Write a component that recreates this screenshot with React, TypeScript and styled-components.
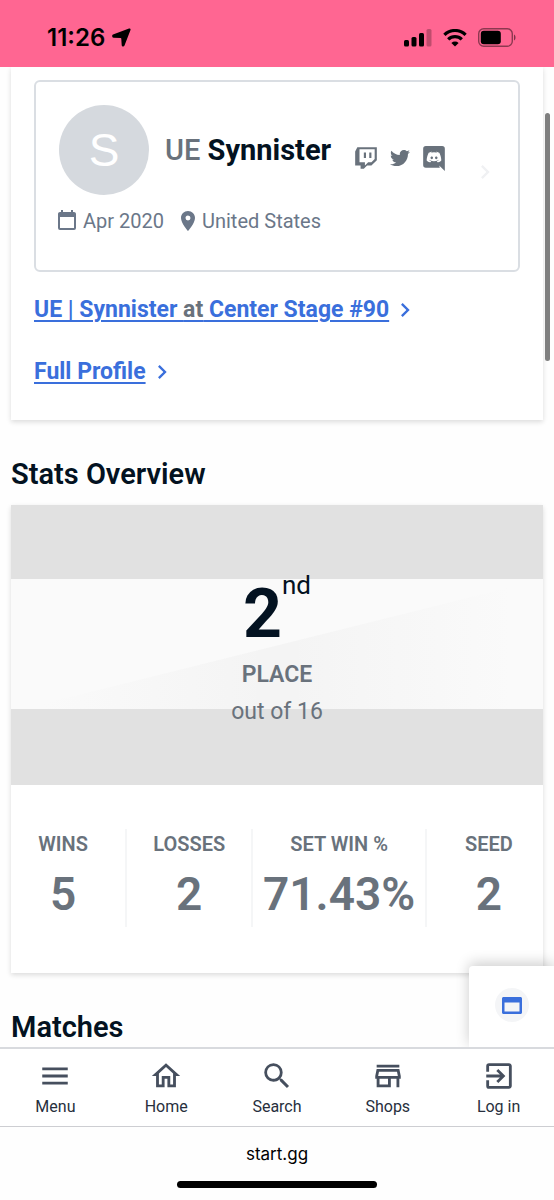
import React from "react";
import styled, { createGlobalStyle } from "styled-components";
import {
  MdMenu,
  MdSearch,
  MdOutlineStore,
  MdExitToApp,
  MdPlace,
  MdChevronRight,
} from "react-icons/md";
import { FaTwitter } from "react-icons/fa";

const GlobalStyle = createGlobalStyle`
  *, *::before, *::after { box-sizing: border-box; }
  body {
    margin: 0;
    background: #fefefe;
    font-family: Roboto, "Liberation Sans", sans-serif;
    color: #031221;
  }
  h1, h2, p, dl, dd, dt, ul { margin: 0; padding: 0; }
`;

const Page = styled.div`
  display: flex;
  flex-direction: column;
  min-height: 100vh;
`;

const StatusBar = styled.header`
  position: sticky;
  top: 0;
  z-index: 3;
  display: flex;
  align-items: center;
  justify-content: space-between;
  height: 67px;
  padding: 8px 37px 0 47px;
  background: #ff6692;
  color: #000;
`;

const StatusGroup = styled.div<{ $gap: number }>`
  display: flex;
  align-items: center;
  gap: ${(p) => p.$gap}px;
`;

const Clock = styled.span`
  font: 600 24px/32px Inter, sans-serif;
`;

const ScrollThumb = styled.div`
  position: fixed;
  top: 113px;
  right: 4px;
  z-index: 2;
  width: 5px;
  height: 248px;
  border-radius: 3px;
  background: #7f7f7f;
`;

const Main = styled.main`
  flex: 1;
  padding: 0 11px;
`;

const Card = styled.section`
  background: #fff;
  box-shadow: 0 2px 5px rgba(0, 0, 0, 0.14);
`;

const ProfileCard = styled(Card)`
  padding: 13px 23px 32px;
`;

const PlayerBox = styled.div`
  display: flex;
  align-items: center;
  justify-content: space-between;
  height: 192px;
  padding: 0 19px 8px;
  border: 2px solid #dadee3;
  border-radius: 6px;
`;

const PlayerInfo = styled.div`
  display: flex;
  flex-direction: column;
  gap: 12px;
  padding-bottom: 4px;
`;

const MoreArrow = styled(MdChevronRight)`
  color: #f0f1f3;
`;

const PlayerTop = styled.div`
  display: flex;
  align-items: center;
`;

const Avatar = styled.div`
  display: flex;
  align-items: center;
  justify-content: center;
  width: 90px;
  height: 90px;
  margin: 0 16px 0 4px;
  border-radius: 50%;
  background: #d5d9de;
  color: #fff;
  font: 400 46px/90px "Liberation Sans", Arial, sans-serif;
`;

const PlayerName = styled.h1`
  font-size: 29px;
  line-height: 32px;
  font-weight: 700;
`;

const Prefix = styled.span`
  color: #69727c;
  font-weight: 500;
`;

const Socials = styled.div`
  display: flex;
  align-items: center;
  gap: 11px;
  margin-left: 22px;
  padding-top: 16px;
`;

const SocialLink = styled.a`
  display: flex;
  color: #69727c;
`;

const Meta = styled.div`
  display: flex;
  align-items: center;
  gap: 12px;
  color: #6b7789;
  font-size: 20px;
  line-height: 28px;
`;

const MetaItem = styled.span<{ $gap: number }>`
  display: flex;
  align-items: center;
  gap: ${(p) => p.$gap}px;
`;

const LinkRow = styled.p`
  display: flex;
  align-items: center;
  gap: 2px;
  margin-top: 22px;
  color: #3a6fdc;
  font-size: 23px;
  line-height: 32px;
  font-weight: 700;

  & + & { margin-top: 30px; }
`;

const TextLink = styled.a`
  color: #3a6fdc;
  text-decoration: underline;
  text-decoration-thickness: 2px;
  text-underline-offset: 3px;
`;

const Joiner = styled.span`
  color: #69727c;
`;

const SectionTitle = styled.h2`
  padding-top: 38px;
  font-size: 29px;
  line-height: 32px;
  font-weight: 600;
`;

const StatsCard = styled(Card)`
  margin-top: 15px;
  padding-bottom: 46px;
`;

const Placement = styled.div`
  display: flex;
  flex-direction: column;
  align-items: center;
  height: 280px;
  padding-top: 66px;
  background:
    linear-gradient(#e1e1e1 74px, transparent 74px, transparent 204px, #e1e1e1 204px),
    linear-gradient(to right, #fafafa 6%, #fafafa00 48%, #fafafa00 52%, #fafafa 94%),
    linear-gradient(166deg, #fafafa 50%, #f4f4f4 calc(50% + 1px));
`;

const Rank = styled.p`
  display: flex;
  align-items: flex-start;
  font-size: 68px;
  line-height: 86px;
  font-weight: 700;
`;

const Ordinal = styled.span`
  font-size: 26px;
  line-height: 28px;
  font-weight: 400;
`;

const PlaceLabel = styled.p`
  margin-top: 2px;
  color: #69727c;
  font-size: 23px;
  line-height: 32px;
  font-weight: 600;
`;

const PlaceTotal = styled.p`
  margin-top: 5px;
  color: #69727c;
  font-size: 23px;
  line-height: 32px;
`;

const StatList = styled.dl`
  display: grid;
  grid-template-columns: 8fr 8fr 11fr 8fr;
  margin: 44px -10px 0;
`;

const Stat = styled.div`
  height: 98px;
  border-right: 2px solid #f5f6f7;
  color: #69727c;
  text-align: center;

  &:last-child { border-right-color: transparent; }
`;

const StatName = styled.dt`
  font-size: 20px;
  line-height: 30px;
  font-weight: 600;
`;

const StatValue = styled.dd`
  margin-top: 5px;
  font-size: 46px;
  line-height: 60px;
  font-weight: 600;
`;

const Footer = styled.footer`
  position: sticky;
  bottom: 0;
  z-index: 3;
  background: #fefefe;
`;

const WidgetButton = styled.button`
  position: absolute;
  right: 0;
  bottom: 100%;
  z-index: -1;
  display: flex;
  justify-content: center;
  width: 85px;
  height: 81px;
  padding: 22px 0 0;
  border: 0;
  border-radius: 4px 0 0 0;
  background: #fff;
  box-shadow: 0 -3px 14px rgba(0, 0, 0, 0.2);
`;

const WidgetIcon = styled.span`
  display: flex;
  align-items: center;
  justify-content: center;
  width: 34px;
  height: 34px;
  border-radius: 50%;
  background: #f4f5f7;
  color: #3a6fdc;
`;

const TabBar = styled.nav`
  display: grid;
  grid-template-columns: repeat(5, 1fr);
  height: 80px;
  border-top: 2px solid #d8dade;
  border-bottom: 1px solid #cdced2;
  background: #fff;
`;

const Tab = styled.a`
  display: flex;
  flex-direction: column;
  align-items: center;
  padding-top: 10px;
  color: #464f5e;
  text-decoration: none;
`;

const TabLabel = styled.span`
  margin-top: 2px;
  color: #272f3d;
  font-size: 16px;
  line-height: 24px;
`;

const AddressBar = styled.div`
  display: flex;
  flex-direction: column;
  align-items: center;
  gap: 15px;
  padding: 15px 0 12px;
  color: #000;
  font: 400 17px/24px Inter, sans-serif;
`;

const HomeIndicator = styled.div`
  width: 36%;
  height: 7px;
  border-radius: 4px;
  background: #000;
`;

const ICONS = {
  twitch:
    "M4,2H22V14L17,19H13L10,22H7V19H2V6L4,2M20,13V4H6V16H11V19L14,16H17L20,13M15,7H17V12H15V7M12,7V12H10V7H12Z",
  discord:
    "M22,24L16.75,19L17.38,21H4.5A2.5,2.5 0 0,1 2,18.5V3.5A2.5,2.5 0 0,1 4.5,1H19.5A2.5,2.5 0 0,1 22,3.5V24M12,6.8C9.32,6.8 7.44,7.95 7.44,7.95C8.47,7.03 10.27,6.5 10.27,6.5L10.1,6.33C8.41,6.36 6.88,7.53 6.88,7.53C5.16,11.12 5.27,14.22 5.27,14.22C6.67,16.03 8.75,15.9 8.75,15.9L9.46,15C8.21,14.73 7.42,13.62 7.42,13.62C7.42,13.62 9.3,14.9 12,14.9C14.7,14.9 16.58,13.62 16.58,13.62C16.58,13.62 15.79,14.73 14.54,15L15.25,15.9C15.25,15.9 17.33,16.03 18.73,14.22C18.73,14.22 18.84,11.12 17.12,7.53C17.12,7.53 15.59,6.36 13.9,6.33L13.73,6.5C13.73,6.5 15.53,7.03 16.56,7.95C16.56,7.95 14.68,6.8 12,6.8M9.93,10.59C10.58,10.59 11.11,11.16 11.1,11.86C11.1,12.55 10.58,13.13 9.93,13.13C9.29,13.13 8.77,12.55 8.77,11.86C8.77,11.16 9.28,10.59 9.93,10.59M14.1,10.59C14.75,10.59 15.27,11.16 15.27,11.86C15.27,12.55 14.75,13.13 14.1,13.13C13.46,13.13 12.94,12.55 12.94,11.86C12.94,11.16 13.45,10.59 14.1,10.59Z",
  calendar:
    "M19,19H5V8H19M16,1V3H8V1H6V3H5C3.89,3 3,3.89 3,5V19A2,2 0 0,0 5,21H19A2,2 0 0,0 21,19V5C21,3.89 20.1,3 19,3H18V1",
  home:
    "M12,5.69L17,10.19V18H15V12H9V18H7V10.19L12,5.69M12,3L2,12H5V20H11V14H13V20H19V12H22",
};

const PathIcon = ({ name, size }: { name: keyof typeof ICONS; size: number }) => (
  <svg width={size} height={size} viewBox="0 0 24 24" fill="currentColor" aria-hidden="true">
    <path d={ICONS[name]} />
  </svg>
);

const WindowIcon = () => (
  <svg width="20" height="17" viewBox="0 0 20 17" aria-hidden="true">
    <path
      fill="currentColor"
      fillRule="evenodd"
      d="M1.5 0h17c.8 0 1.5.7 1.5 1.5v14c0 .8-.7 1.5-1.5 1.5h-17C.7 17 0 16.3 0 15.5v-14C0 .7.7 0 1.5 0ZM2.5 5.5v9h15v-9Z"
    />
  </svg>
);

const LocationArrow = () => (
  <svg width="19" height="19" viewBox="0 0 19 19" aria-hidden="true">
    <path
      d="M1 6.600 17 .5c1-.4 1.900.4 1.500 1.500L12.500 17.600c-.5 1.300-2.700 1.100-2.800-.4L9.300 10.800c0-.5-.2-.7-.7-.7L1.600 9.800C-.1 9.700-.3 7.200 1 6.600Z"
      fill="#000"
    />
  </svg>
);

const Signal = () => (
  <svg width="28" height="18" viewBox="0 0 28 18" aria-hidden="true">
    <rect x="0" y="11" width="5" height="6.5" rx="1.5" />
    <rect x="7.5" y="8" width="5" height="9.5" rx="1.5" />
    <rect x="15" y="4" width="5" height="13.5" rx="1.5" />
    <rect x="22.5" y="0" width="5" height="17.5" rx="1.5" opacity="0.25" />
  </svg>
);

const Wifi = () => (
  <svg width="24" height="18" viewBox="0 0 24 18" aria-hidden="true">
    <path d="M1.4 5.8a15.2 15.2 0 0 1 21.2 0" fill="none" stroke="#000" strokeWidth="3.2" />
    <path d="M5.2 10.3a9.8 9.8 0 0 1 13.6 0" fill="none" stroke="#000" strokeWidth="3.2" />
    <path d="M12 17.5 8.4 13.9a5.2 5.2 0 0 1 7.2 0Z" />
  </svg>
);

const Battery = () => (
  <svg width="39" height="19" viewBox="0 0 39 19" aria-hidden="true">
    <rect x=".7" y=".7" width="33.6" height="17.6" rx="5" fill="none" stroke="#000" strokeOpacity="0.45" strokeWidth="1.4" />
    <rect x="2.8" y="2.8" width="20" height="13.4" rx="3" />
    <path d="M36 6.5c2 .8 2 5.2 0 6Z" opacity="0.5" />
  </svg>
);

const stats = [
  { name: "WINS", value: "5" },
  { name: "LOSSES", value: "2" },
  { name: "SET WIN %", value: "71.43%" },
  { name: "SEED", value: "2" },
];

const tabs = [
  { label: "Menu", icon: <MdMenu size={34} /> },
  { label: "Home", icon: <PathIcon name="home" size={34} /> },
  { label: "Search", icon: <MdSearch size={34} /> },
  { label: "Shops", icon: <MdOutlineStore size={34} /> },
  { label: "Log in", icon: <MdExitToApp size={34} /> },
];

export default function App() {
  return (
    <Page>
      <GlobalStyle />
      <StatusBar>
        <StatusGroup $gap={7}>
          <Clock>11:26</Clock>
          <LocationArrow />
        </StatusGroup>
        <StatusGroup $gap={11}>
          <Signal />
          <Wifi />
          <Battery />
        </StatusGroup>
      </StatusBar>
      <ScrollThumb />

      <Main>
        <ProfileCard>
          <PlayerBox>
            <PlayerInfo>
              <PlayerTop>
                <Avatar>S</Avatar>
                <PlayerName>
                  <Prefix>UE</Prefix> Synnister
                </PlayerName>
                <Socials>
                  <SocialLink href="#twitch" aria-label="Twitch">
                    <PathIcon name="twitch" size={26} />
                  </SocialLink>
                  <SocialLink href="#twitter" aria-label="Twitter">
                    <FaTwitter size={20} />
                  </SocialLink>
                  <SocialLink href="#discord" aria-label="Discord">
                    <PathIcon name="discord" size={26} />
                  </SocialLink>
                </Socials>
              </PlayerTop>
              <Meta>
                <MetaItem $gap={4}>
                  <PathIcon name="calendar" size={24} />
                  Apr 2020
                </MetaItem>
                <MetaItem $gap={2}>
                  <MdPlace size={24} />
                  United States
                </MetaItem>
              </Meta>
            </PlayerInfo>
            <MoreArrow size={28} />
          </PlayerBox>
          <LinkRow>
            <TextLink href="#standing">
              UE | Synnister <Joiner>at</Joiner> Center Stage #90
            </TextLink>
            <MdChevronRight size={28} />
          </LinkRow>
          <LinkRow>
            <TextLink href="#profile">Full Profile</TextLink>
            <MdChevronRight size={28} />
          </LinkRow>
        </ProfileCard>

        <SectionTitle>Stats Overview</SectionTitle>
        <StatsCard>
          <Placement>
            <Rank>
              2<Ordinal>nd</Ordinal>
            </Rank>
            <PlaceLabel>PLACE</PlaceLabel>
            <PlaceTotal>out of 16</PlaceTotal>
          </Placement>
          <StatList>
            {stats.map((s) => (
              <Stat key={s.name}>
                <StatName>{s.name}</StatName>
                <StatValue>{s.value}</StatValue>
              </Stat>
            ))}
          </StatList>
        </StatsCard>

        <SectionTitle>Matches</SectionTitle>
      </Main>

      <Footer>
        <WidgetButton aria-label="Open panel">
          <WidgetIcon>
            <WindowIcon />
          </WidgetIcon>
        </WidgetButton>
        <TabBar>
          {tabs.map((t) => (
            <Tab key={t.label} href={"#" + t.label.toLowerCase().replace(" ", "-")}>
              {t.icon}
              <TabLabel>{t.label}</TabLabel>
            </Tab>
          ))}
        </TabBar>
        <AddressBar>
          <span>start.gg</span>
          <HomeIndicator />
        </AddressBar>
      </Footer>
    </Page>
  );
}
